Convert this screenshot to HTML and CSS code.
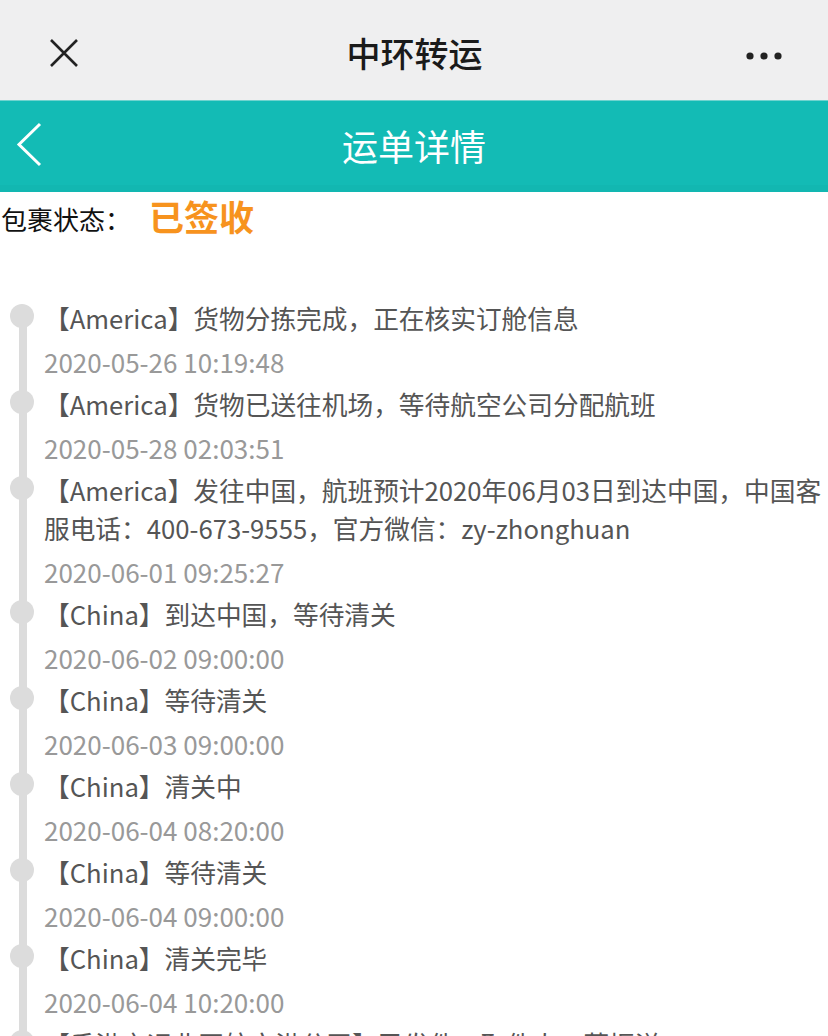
FILE: index.html
```html
<!DOCTYPE html>
<html lang="zh-CN">
  <head>
    <meta charset="UTF-8" />
    <meta name="viewport" content="width=device-width, initial-scale=1.0" />
    <title>中环转运</title>
    <link rel="stylesheet" href="styles.css">
  </head>
  <body>
    <header class="topbar">
      <div class="topbar-left">
        <svg width="30" height="30" viewBox="0 0 30 30">
          <path d="M2 2 L28 28 M28 2 L2 28" stroke="#222" stroke-width="2.6" fill="none" />
        </svg>
      </div>
      <div class="topbar-title">中环转运</div>
      <div class="topbar-right">
        <svg width="36" height="10" viewBox="0 0 36 10">
          <circle cx="4" cy="5" r="3.6" fill="#222" />
          <circle cx="18" cy="5" r="3.6" fill="#222" />
          <circle cx="32" cy="5" r="3.6" fill="#222" />
        </svg>
      </div>
    </header>

    <nav class="navbar">
      <div class="navbar-back">
        <svg width="30" height="46" viewBox="0 0 30 46">
          <path d="M24 2 L3 22.5 L24 43" stroke="#fff" stroke-width="3" fill="none" />
        </svg>
      </div>
      <div class="navbar-title">运单详情</div>
      <div></div>
    </nav>

    <main>
      <div class="status">
        <span class="status-label">包裹状态：</span>
        <span class="status-value">已签收</span>
      </div>

      <ul class="timeline">
        <li>
          <p class="event">【America】货物分拣完成，正在核实订舱信息</p>
          <p class="time">2020-05-26 10:19:48</p>
        </li>
        <li>
          <p class="event">【America】货物已送往机场，等待航空公司分配航班</p>
          <p class="time">2020-05-28 02:03:51</p>
        </li>
        <li>
          <p class="event">【America】发往中国，航班预计2020年06月03日到达中国，中国客服电话：400-673-9555，官方微信：zy-zhonghuan</p>
          <p class="time">2020-06-01 09:25:27</p>
        </li>
        <li>
          <p class="event">【China】到达中国，等待清关</p>
          <p class="time">2020-06-02 09:00:00</p>
        </li>
        <li>
          <p class="event">【China】等待清关</p>
          <p class="time">2020-06-03 09:00:00</p>
        </li>
        <li>
          <p class="event">【China】清关中</p>
          <p class="time">2020-06-04 08:20:00</p>
        </li>
        <li>
          <p class="event">【China】等待清关</p>
          <p class="time">2020-06-04 09:00:00</p>
        </li>
        <li>
          <p class="event">【China】清关完毕</p>
          <p class="time">2020-06-04 10:20:00</p>
        </li>
        <li>
          <p class="event">【香港京运北区航空港分司】已发件，取件人：蔡振洋 15800007728</p>
          <p class="time">2020-06-05 08:10:00</p>
        </li>
      </ul>
    </main>
  </body>
</html>
```

FILE: styles.css
```css
body {
  margin: 0;
  font-family: "Noto Sans CJK SC", "Liberation Sans", sans-serif;
  background: #fff;
  overflow: hidden;
}

.topbar {
  height: 100px;
  background: #efeff0;
  display: grid;
  grid-template-columns: 120px 1fr 120px;
  align-items: center;
}

.topbar-left {
  padding-left: 49px;
  display: flex;
  padding-top: 6px;
}

.topbar-title {
  text-align: center;
  font-size: 34px;
  font-weight: 500;
  color: #1a1a1a;
  line-height: 1;
  padding-left: 1px;
  padding-top: 6px;
}

.topbar-right {
  display: flex;
  justify-content: flex-end;
  padding-right: 46px;
  padding-top: 12px;
}

.navbar {
  height: 84px;
  background: #13bbb5;
  border-top: 1px solid #6fd3cf;
  border-bottom: 7px solid #12b7b1;
  display: grid;
  grid-template-columns: 120px 1fr 120px;
  align-items: center;
}

.navbar-back {
  display: flex;
  padding-left: 16px;
  padding-top: 3px;
}

.navbar-title {
  text-align: center;
  color: #fff;
  font-size: 36px;
  line-height: 1;
  padding-top: 3px;
}

.status {
  height: 52px;
  display: flex;
  align-items: center;
  padding-left: 1px;
}

.status-label {
  font-size: 26px;
  color: #111;
}

.status-value {
  font-size: 35px;
  font-weight: bold;
  color: #f7931e;
  margin-left: 18px;
  margin-top: -6px;
}

.timeline {
  list-style: none;
  margin: 55px 0 0;
  padding: 0;
  background: linear-gradient(#dcdcdc, #dcdcdc) no-repeat 19px 8px / 8px 100%;
}

.timeline li {
  position: relative;
  padding: 0 0 4px 44px;
}

.timeline li::before {
  content: "";
  position: absolute;
  left: 10px;
  top: 5px;
  width: 24px;
  height: 24px;
  border-radius: 50%;
  background: #dcdcdc;
}

.event {
  margin: 0;
  font-size: 25.7px;
  line-height: 38px;
  color: #555;
}

.time {
  margin: 6px 0 0;
  font-size: 26px;
  line-height: 38px;
  color: #999;
}
```
